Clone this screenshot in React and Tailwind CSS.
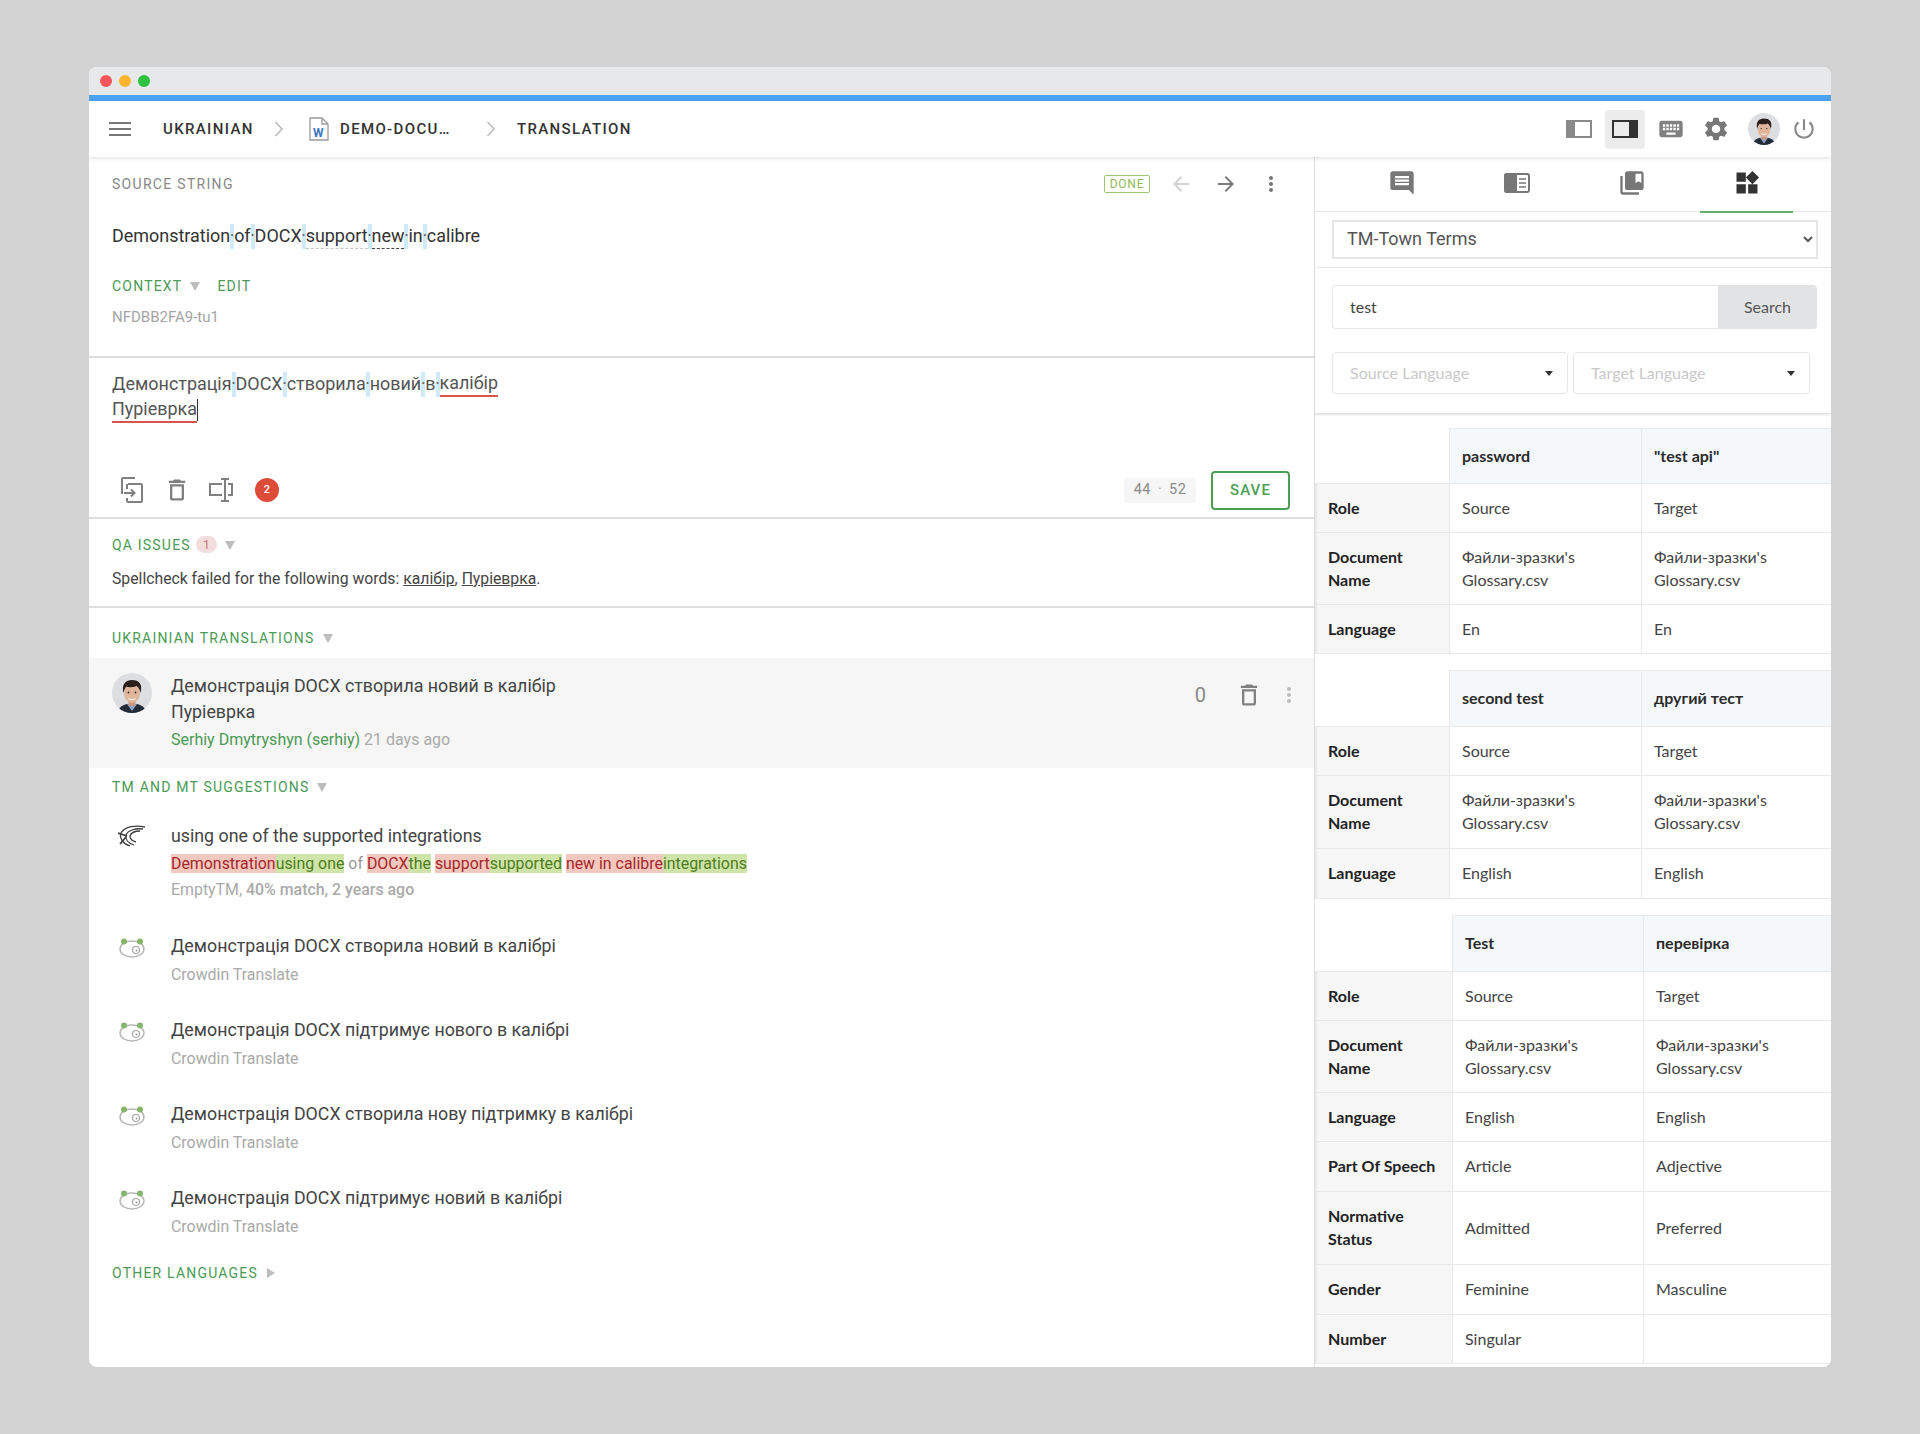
import {
  MdArrowBack,
  MdArrowForward,
  MdCollectionsBookmark,
  MdInsertComment,
  MdKeyboard,
  MdMoreVert,
  MdOutlineDelete,
  MdPowerSettingsNew,
  MdSettings,
  MdWidgets,
} from 'react-icons/md';

const Caret = ({ right }) => (
  <svg width="10" height="10" viewBox="0 0 10 10" className="shrink-0">
    <polygon points={right ? '1,0 9,5 1,10' : '0,1 10,1 5,10'} fill="#bdbdbd" />
  </svg>
);

const Chevron = () => (
  <svg width="10" height="18" viewBox="0 0 10 18" className="shrink-0">
    <polyline points="1.5,2 8,9 1.5,16" fill="none" stroke="#bcbcbc" strokeWidth="1.6" />
  </svg>
);

const Label = ({ children, className = '' }) => (
  <span className={`text-[14px] leading-[20px] tracking-[1.2px] text-[#4b9a55] ${className}`}>{children}</span>
);

const Sep = ({ h = 'h-[25px]' }) => (
  <span className={`inline-block w-[4px] ${h} bg-[#cfeafb] text-center align-middle leading-[24px] text-[#666]`}>
    <span className="ml-[-2px] inline-block w-[8px]">·</span>
  </span>
);

const Avatar = ({ className }) => (
  <div className={`overflow-hidden rounded-full bg-[#dcdee1] ${className}`}>
    <svg viewBox="0 0 40 40" className="h-full w-full">
      <path d="M6 40c0-5 4-8 9-9l5 2 5-2c5 1 9 4 9 9z" fill="#232a38" />
      <path d="M15 31l5 7 5-7-5 1z" fill="#8fa6c4" />
      <rect x="16.500" y="26" width="7" height="7" fill="#c99a80" />
      <ellipse cx="20" cy="20" rx="8" ry="10" fill="#e0b59c" />
      <path d="M11.500 20C9.500 12 13 7 20 7s11 4 8.500 13c-.5-3-2-6-4-7-3 1.500-8 1.500-10 .5-1.500 1.500-2.500 3.500-3 6.500z" fill="#2a1f1b" />
      <path d="M16 25c2.500 1.500 5.500 1.500 8 0-1 3-7 3-8 0z" fill="#fff" />
      <circle cx="16.500" cy="19.500" r=".9" fill="#3a2a24" />
      <circle cx="23.500" cy="19.500" r=".9" fill="#3a2a24" />
    </svg>
  </div>
);

const PanelLeftIcon = ({ active }) => {
  const c = active ? '#333' : '#8a8a8a';
  return (
    <svg width="26" height="18" viewBox="0 0 26 18">
      <rect x="0" y="0" width="7" height="18" fill={c} />
      <rect x="8" y="1" width="17" height="16" fill="none" stroke={c} strokeWidth="2" />
    </svg>
  );
};

const PanelRightIcon = () => (
  <svg width="26" height="18" viewBox="0 0 26 18">
    <rect x="1" y="1" width="17" height="16" fill="none" stroke="#333" strokeWidth="2" />
    <rect x="19" y="0" width="7" height="18" fill="#333" />
  </svg>
);

const ReaderIcon = () => (
  <svg width="26" height="20" viewBox="0 0 26 20">
    <rect x="1" y="1" width="24" height="18" rx="2" fill="none" stroke="#777" strokeWidth="2" />
    <path d="M3 0h10v20H3a3 3 0 0 1-3-3V3a3 3 0 0 1 3-3z" fill="#777" />
    <path d="M15 6h7M15 10h7M15 14h7" stroke="#777" strokeWidth="1.6" />
  </svg>
);

const CopyIcon = () => (
  <svg width="22" height="26" viewBox="0 0 22 26" fill="none" stroke="#808080" strokeWidth="2">
    <path d="M14 1H2a1 1 0 0 0-1 1v15" />
    <path d="M7 7h13a1 1 0 0 1 1 1v16a1 1 0 0 1-1 1H7a1 1 0 0 1-1-1v-3" />
    <path d="M3 16h10M10 12.5l3.500 3.500-3.500 3.500" />
    <path d="M6 7v5" />
  </svg>
);

const RewriteIcon = () => (
  <svg width="24" height="24" viewBox="0 0 24 24" fill="none" stroke="#808080" strokeWidth="2">
    <path d="M13 6H1v11h12" />
    <path d="M19 6h4v11h-4" />
    <path d="M12 1h8M16 1v22M12 23h8" />
  </svg>
);

const WordIcon = () => (
  <svg width="20" height="24" viewBox="0 0 20 24">
    <path d="M1 1h12l6 6v16H1z" fill="#fff" stroke="#9a9a9a" strokeWidth="1.3" />
    <path d="M13 1v6h6" fill="none" stroke="#9a9a9a" strokeWidth="1.3" />
    <text x="10" y="20" textAnchor="middle" fontSize="12" fontWeight="700" fill="#3f78c0" fontFamily="Roboto, sans-serif">W</text>
  </svg>
);

const TmLogo = () => (
  <svg width="28" height="22" viewBox="0 0 28 22" fill="none" stroke="#3f3f3f" strokeWidth="1.3">
    <path d="M27 2C18 0 7 1 3 8c-2 5 2 11 9 13" />
    <path d="M25 4C18 3 10 5 8 10c-1 4 2 8 8 10" />
    <path d="M22 6c-6 0-9 2-10 5 0 3 2 5 6 6" />
    <path d="M0 8l9 3M2 19l6-7" strokeWidth="1.8" />
  </svg>
);

const Panda = () => (
  <svg width="26" height="20" viewBox="0 0 26 20" fill="none">
    <ellipse cx="13" cy="11" rx="12" ry="8" stroke="#b8b8b8" strokeWidth="1.5" />
    <circle cx="5" cy="3.500" r="3" fill="#84b56c" />
    <circle cx="21" cy="3.500" r="3" fill="#84b56c" />
    <circle cx="17" cy="12" r="3.500" stroke="#a8a8a8" strokeWidth="1.2" />
    <circle cx="17.500" cy="12.500" r="1" fill="#999" />
  </svg>
);

const sourceWords = ['Demonstration', 'of', 'DOCX', 'support', 'new', 'in', 'calibre'];
const targetWords = ['Демонстрація', 'DOCX', 'створила', 'новий', 'в'];

const suggestions = [
  'Демонстрація DOCX створила новий в калібрі',
  'Демонстрація DOCX підтримує нового в калібрі',
  'Демонстрація DOCX створила нову підтримку в калібрі',
  'Демонстрація DOCX підтримує новий в калібрі',
];

const Del = ({ children }) => <span className="bg-[#f3c9bf] text-[#a5262b]">{children}</span>;
const Ins = ({ children }) => <span className="bg-[#cfe4a9] text-[#4f7d20]">{children}</span>;

const doc = ['Файли-зразки\'s', 'Glossary.csv'];

const glossary = [
  {
    cols: ['w-[133px]', 'w-[192px]'],
    head: ['password', '"test api"', 'h-[55px]'],
    rows: [
      ['Role', 'Source', 'Target', 'h-[49px]'],
      [['Document', 'Name'], doc, doc, 'h-[72px]'],
      ['Language', 'En', 'En', 'h-[49px]'],
    ],
  },
  {
    cols: ['w-[133px]', 'w-[192px]'],
    head: ['second test', 'другий тест', 'h-[56px]'],
    rows: [
      ['Role', 'Source', 'Target', 'h-[49px]'],
      [['Document', 'Name'], doc, doc, 'h-[73px]'],
      ['Language', 'English', 'English', 'h-[50px]'],
    ],
  },
  {
    cols: ['w-[136px]', 'w-[191px]'],
    head: ['Test', 'перевірка', 'h-[56px]'],
    rows: [
      ['Role', 'Source', 'Target', 'h-[49px]'],
      [['Document', 'Name'], doc, doc, 'h-[72px]'],
      ['Language', 'English', 'English', 'h-[49px]'],
      ['Part Of Speech', 'Article', 'Adjective', 'h-[50px]'],
      [['Normative', 'Status'], 'Admitted', 'Preferred', 'h-[73px]'],
      ['Gender', 'Feminine', 'Masculine', 'h-[50px]'],
      ['Number', 'Singular', '', 'h-[49px]'],
    ],
  },
];

const Lines = ({ value }) =>
  Array.isArray(value) ? value.map((line) => <div key={line}>{line}</div>) : value;

const GlossaryTable = ({ table, className = '' }) => (
  <table className={`w-[516px] table-fixed border-collapse font-[Lato,sans-serif] text-[16px] leading-[23px] ${className}`}>
    <colgroup>
      <col className={table.cols[0]} />
      <col className={table.cols[1]} />
      <col />
    </colgroup>
    <thead>
      <tr>
        <th className={table.head[2]} />
        {table.head.slice(0, 2).map((h) => (
          <th key={h} className="border border-r-0 border-[#e9e9e9] bg-[#f5f8fa] pb-[2px] pl-[12.500px] text-left font-bold text-[#2b2b2b]">
            {h}
          </th>
        ))}
      </tr>
    </thead>
    <tbody>
      {table.rows.map((row, i) => (
        <tr key={i}>
          <th className={`border-2 border-y border-r border-[#e9e9e9] bg-[#f6f6f6] pb-[2px] pl-[11px] text-left font-bold text-[#222] ${row[3]}`}>
            <Lines value={row[0]} />
          </th>
          <td className="border border-[#e9e9e9] pb-[2px] pl-[12.500px] text-[#444]">
            <Lines value={row[1]} />
          </td>
          <td className="border border-r-0 border-[#e9e9e9] pb-[2px] pl-[12.500px] text-[#444]">
            <Lines value={row[2]} />
          </td>
        </tr>
      ))}
    </tbody>
  </table>
);

const LangSelect = ({ label, className }) => (
  <div className={`flex h-[42px] items-center justify-between rounded-[4px] border border-[#e6e6e6] pl-[17px] pr-[14px] ${className}`}>
    <span className="text-[16px] text-[#c9c9c9]">{label}</span>
    <span className="h-0 w-0 border-x-[4.500px] border-t-[5px] border-x-transparent border-t-[#333]" />
  </div>
);

export default function App() {
  return (
    <div className="h-[1434px] w-[1920px] bg-[#d2d2d2] pl-[89px] pt-[67px] font-[Roboto,sans-serif]">
      <div className="flex h-[1300px] w-[1742px] flex-col overflow-hidden rounded-[8px] bg-white">
        {/* Browser chrome */}
        <div className="flex h-[28px] items-center gap-[7px] bg-[#e7e8e9] pl-[11px]">
          <span className="h-[12px] w-[12px] rounded-full bg-[#f8565a]" />
          <span className="h-[12px] w-[12px] rounded-full bg-[#fdb52e]" />
          <span className="h-[12px] w-[12px] rounded-full bg-[#2cc23f]" />
        </div>
        <div className="h-[6px] bg-[#4da3f4]" />

        {/* Breadcrumb bar */}
        <div className="relative z-10 flex h-[56px] items-center shadow-[0_1px_5px_rgba(0,0,0,0.14)]">
          <div className="ml-[20px] flex w-[22px] flex-col gap-[4px]">
            <span className="h-[2px] bg-[#777]" />
            <span className="h-[2px] bg-[#777]" />
            <span className="h-[2px] bg-[#777]" />
          </div>
          <div className="ml-[32px] flex items-center text-[15px] font-medium tracking-[1.35px] text-[#333]">
            <span className="w-[89px]">UKRAINIAN</span>
            <span className="ml-[22px]"><Chevron /></span>
            <span className="ml-[25px]"><WordIcon /></span>
            <span className="ml-[11px] w-[111px] whitespace-nowrap">DEMO-DOCU…</span>
            <span className="ml-[35px]"><Chevron /></span>
            <span className="ml-[21px]">TRANSLATION</span>
          </div>
          <div className="ml-auto flex items-center">
            <PanelLeftIcon />
            <div className="ml-[13px] flex h-[39px] w-[40px] items-center justify-center rounded-[4px] bg-[#ececec]">
              <PanelRightIcon />
            </div>
            <MdKeyboard className="ml-[12px] text-[28px] text-[#808080]" />
            <MdSettings className="ml-[17px] text-[28px] text-[#777]" />
            <Avatar className="ml-[18px] h-[32px] w-[32px]" />
            <MdPowerSettingsNew className="ml-[11px] mr-[14px] text-[26px] text-[#8a8a8a]" />
          </div>
        </div>

        <div className="flex min-h-0 flex-1">
          {/* Editor column */}
          <div className="w-[1225px] shrink-0">
            <section className="h-[201px] border-b-2 border-[#dedede] px-[23px]">
              <div className="flex h-[54px] items-center">
                <span className="text-[14px] tracking-[1.3px] text-[#888]">SOURCE STRING</span>
                <span className="ml-auto w-[46px] rounded-[2px] border border-[#9cc66f] text-center text-[12px] leading-[16px] tracking-[0.8px] text-[#8fbb60]">DONE</span>
                <MdArrowBack className="ml-[19px] text-[24px] text-[#d2d2d2]" />
                <MdArrowForward className="ml-[21px] text-[24px] text-[#7a7a7a]" />
                <MdMoreVert className="ml-[21px] mr-[8px] text-[24px] text-[#777]" />
              </div>
              <div className="mt-[12px] flex h-[26px] items-center text-[17.950px] leading-[26px] text-[#333]">
                {sourceWords.map((w, i) => (
                  <span key={w} className="flex items-center">
                    {i > 0 && <Sep />}
                    <span
                      className={
                        w === 'support'
                          ? 'border-b border-dashed border-[#c5c5c5] leading-[24px]'
                          : w === 'new'
                            ? 'border-b border-dashed border-[#444] leading-[24px]'
                            : ''
                      }
                    >
                      {w}
                    </span>
                  </span>
                ))}
              </div>
              <div className="mt-[27px] flex h-[20px] items-center">
                <Label>CONTEXT</Label>
                <span className="ml-[8px]"><Caret /></span>
                <Label className="ml-[17px]">EDIT</Label>
              </div>
              <div className="mt-[11px] text-[15px] leading-[20px] text-[#a5a5a5]">NFDBB2FA9-tu1</div>
            </section>

            <section className="h-[161px] border-b-2 border-[#dedede] px-[23px]">
              <div className="pt-[13px] text-[17.950px] leading-[26px] text-[#555]">
                <div className="flex h-[26px] items-center">
                  {targetWords.map((w) => (
                    <span key={w} className="flex items-center">
                      {w}
                      <Sep />
                    </span>
                  ))}
                  <span className="border-b-2 border-[#d9534f] leading-[24px]">калібір</span>
                </div>
                <div className="flex h-[26px] items-center">
                  <span className="border-b-2 border-[#d9534f] leading-[24px]">Пуріеврка</span>
                  <span className="h-[22px] w-px bg-[#333]" />
                </div>
              </div>
              <div className="mt-[47px] flex h-[40px] items-center">
                <span className="ml-[9px]"><CopyIcon /></span>
                <MdOutlineDelete className="ml-[20px] text-[28px] text-[#808080]" />
                <span className="ml-[18px]"><RewriteIcon /></span>
                <span className="ml-[22px] flex h-[24px] w-[24px] items-center justify-center rounded-full bg-[#dd4b39] text-[11px] font-medium text-white">2</span>
                <span className="ml-auto flex h-[25px] w-[72px] items-center justify-center rounded-[4px] bg-[#f6f6f6] text-[14.500px] tracking-[0.4px] text-[#8a8a8a]">
                  44 <span className="mx-[7px] text-[#aaa]">·</span> 52
                </span>
                <span className="ml-[15px] mr-[1px] flex h-[39px] w-[79px] items-center justify-center rounded-[4px] border-2 border-[#4b9f54] text-[15px] font-medium tracking-[1.1px] text-[#4b9f54]">SAVE</span>
              </div>
            </section>

            <section className="h-[89px] border-b-2 border-[#dedede] px-[23px]">
              <div className="flex h-[50px] items-center pt-[1px]">
                <Label>QA ISSUES</Label>
                <span className="ml-[5px] flex h-[17px] w-[21px] items-center justify-center rounded-full bg-[#f3dcdc] text-[13px] text-[#c97c7c]">1</span>
                <span className="ml-[8px]"><Caret /></span>
              </div>
              <div className="text-[15.750px] leading-[20px] text-[#444]">
                Spellcheck failed for the following words: <span className="underline">калібір</span>, <span className="underline">Пуріеврка</span>.
              </div>
            </section>

            <div className="flex h-[50px] items-center px-[23px] pt-[10px]">
              <Label>UKRAINIAN TRANSLATIONS</Label>
              <span className="ml-[8px]"><Caret /></span>
            </div>

            <div className="flex h-[110px] bg-[#f6f6f6] pl-[23px] pt-[15px]">
              <Avatar className="h-[40px] w-[40px]" />
              <div className="ml-[19px]">
                <div className="text-[17.800px] leading-[26px] text-[#444]">
                  <div>Демонстрація DOCX створила новий в калібір</div>
                  <div>Пуріеврка</div>
                </div>
                <div className="mt-[3px] text-[16px] leading-[24px]">
                  <span className="text-[#4b9a55]">Serhiy Dmytryshyn (serhiy)</span>
                  <span className="text-[#aaa]"> 21 days ago</span>
                </div>
              </div>
              <div className="ml-auto flex h-[44px] items-center pr-[13.500px]">
                <span className="text-[20px] text-[#888]">0</span>
                <MdOutlineDelete className="ml-[29px] text-[28px] text-[#808080]" />
                <MdMoreVert className="ml-[13.500px] text-[24px] text-[#bcbcbc]" />
              </div>
            </div>

            <div className="flex h-[38px] items-center px-[23px]">
              <Label>TM AND MT SUGGESTIONS</Label>
              <span className="ml-[8px]"><Caret /></span>
            </div>

            <div className="flex pl-[29px] pt-[17px]">
              <span className="pt-[2px]"><TmLogo /></span>
              <div className="ml-[25px]">
                <div className="text-[17.800px] leading-[26px] text-[#444]">using one of the supported integrations</div>
                <div className="mt-[5px] text-[15.900px] leading-[20px] text-[#999]">
                  <Del>Demonstration</Del><Ins>using one</Ins> of <Del>DOCX</Del><Ins>the</Ins> <Del>support</Del><Ins>supported</Ins> <Del>new in calibre</Del><Ins>integrations</Ins>
                </div>
                <div className="mt-[6px] text-[15.900px] leading-[20px] text-[#aaa]">
                  EmptyTM, <span className="font-medium">40% match, 2 years ago</span>
                </div>
              </div>
            </div>

            <div className="mt-[33px] flex flex-col gap-[33px]">
              {suggestions.map((s) => (
                <div key={s} className="flex h-[51px] pl-[30px]">
                  <span className="pt-[5px]"><Panda /></span>
                  <div className="ml-[26px]">
                    <div className="text-[17.800px] leading-[26px] text-[#444]">{s}</div>
                    <div className="mt-[6px] text-[15.900px] leading-[20px] text-[#aaa]">Crowdin Translate</div>
                  </div>
                </div>
              ))}
            </div>

            <div className="mt-[27px] flex items-center px-[23px]">
              <Label>OTHER LANGUAGES</Label>
              <span className="ml-[8px]"><Caret right /></span>
            </div>
          </div>

          {/* Glossary column */}
          <div className="w-[517px] shrink-0 border-l border-[#dedede]">
            <div className="flex h-[55px] border-b border-[#e8e8e8] pl-[29px]">
              {[
                <MdInsertComment key="a" className="text-[28px] text-[#777]" />,
                <ReaderIcon key="b" />,
                <MdCollectionsBookmark key="c" className="text-[28px] text-[#777]" />,
                <MdWidgets key="d" className="text-[28px] text-[#333]" />,
              ].map((icon, i) => (
                <div key={i} className="relative flex h-[55px] w-[115px] items-center justify-center pb-[3px]">
                  {icon}
                  {i === 3 && <span className="absolute bottom-[-1px] left-[11px] h-[2px] w-[93px] bg-[#66ad6e]" />}
                </div>
              ))}
            </div>

            <div className="px-[17px] pr-[13px] pt-[8px]">
              <select defaultValue="TM-Town Terms" className="h-[39px] w-[486px] border-2 border-[#e6e6e6] pl-[9px] pb-[2px] text-[18px] text-[#555]">
                <option>TM-Town Terms</option>
              </select>
            </div>

            <div className="mt-[8px] h-[146px] rounded-tl-[4px] border-t border-[#e5e5e5] pl-[17px] pr-[14px] pt-[17px] shadow-[0_2px_2px_rgba(0,0,0,0.12)] font-[Lato,sans-serif]">
              <div className="flex h-[44px] w-[485px]">
                <input readOnly value="test" className="min-w-0 flex-1 rounded-l-[4px] border border-r-0 border-[#e8e8e8] pl-[17px] text-[16px] text-[#444] outline-none" />
                <span className="flex w-[99px] items-center justify-center rounded-r-[4px] bg-[#e1e3e5] text-[16px] text-[#555]">Search</span>
              </div>
              <div className="mt-[23px] flex gap-[5px]">
                <LangSelect label="Source Language" className="w-[236px]" />
                <LangSelect label="Target Language" className="w-[237px]" />
              </div>
            </div>

            <div className="pt-[15px]">
              {glossary.map((t, i) => (
                <GlossaryTable key={i} table={t} className={i > 0 ? 'mt-[16px]' : ''} />
              ))}
            </div>
          </div>
        </div>
      </div>
    </div>
  );
}
